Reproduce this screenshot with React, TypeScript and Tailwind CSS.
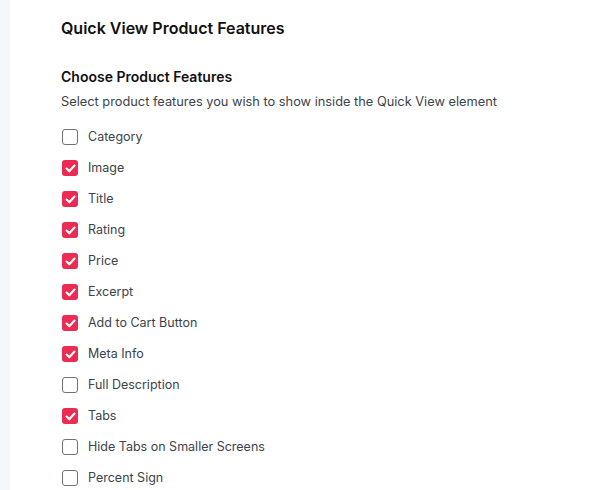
import React from "react";

const items: [string, boolean][] = [
  ["Category", false],
  ["Image", true],
  ["Title", true],
  ["Rating", true],
  ["Price", true],
  ["Excerpt", true],
  ["Add to Cart Button", true],
  ["Meta Info", true],
  ["Full Description", false],
  ["Tabs", true],
  ["Hide Tabs on Smaller Screens", false],
  ["Percent Sign", false],
];

function Box({ on }: { on: boolean }) {
  if (on) {
    return (
      <span className="flex h-4 w-4 items-center justify-center rounded-[3px] bg-[#ec2a52]">
        <svg width="13" height="13" viewBox="0 0 12 12" fill="none">
          <path d="M2.4 6.1 L4.9 8.6 L9.7 3.3" stroke="white" strokeWidth="2" strokeLinecap="round" strokeLinejoin="round" />
        </svg>
      </span>
    );
  }
  return <span className="block h-4 w-4 rounded-[3px] border-[1.5px] border-[#6e7378] bg-white" />;
}

export default function App() {
  return (
    <div className="flex h-[490px] w-[611px] overflow-hidden bg-white" style={{ fontFamily: "Inter, 'Noto Sans', sans-serif" }}>
      <div className="w-[10px] shrink-0 bg-[#f6f7f9]" />
      <div className="flex flex-col pl-[51px] pt-[18px]">
        <h1 className="text-[16px] font-semibold leading-5 text-[#111111]">Quick View Product Features</h1>
        <h2 className="mt-[29px] text-[14px] font-semibold leading-5 text-[#111111]">Choose Product Features</h2>
        <p className="mt-[5px] text-[12.8px] leading-5 text-[#3c434a]">Select product features you wish to show inside the Quick View element</p>
        <div className="mt-[15px] flex flex-col gap-[11px] pl-px">
          {items.map(([label, on]) => (
            <div key={label} className="flex h-5 items-center gap-[10px]">
              <Box on={on} />
              <span className="text-[12.5px] leading-5 text-[#3c434a]">{label}</span>
            </div>
          ))}
        </div>
      </div>
    </div>
  );
}
